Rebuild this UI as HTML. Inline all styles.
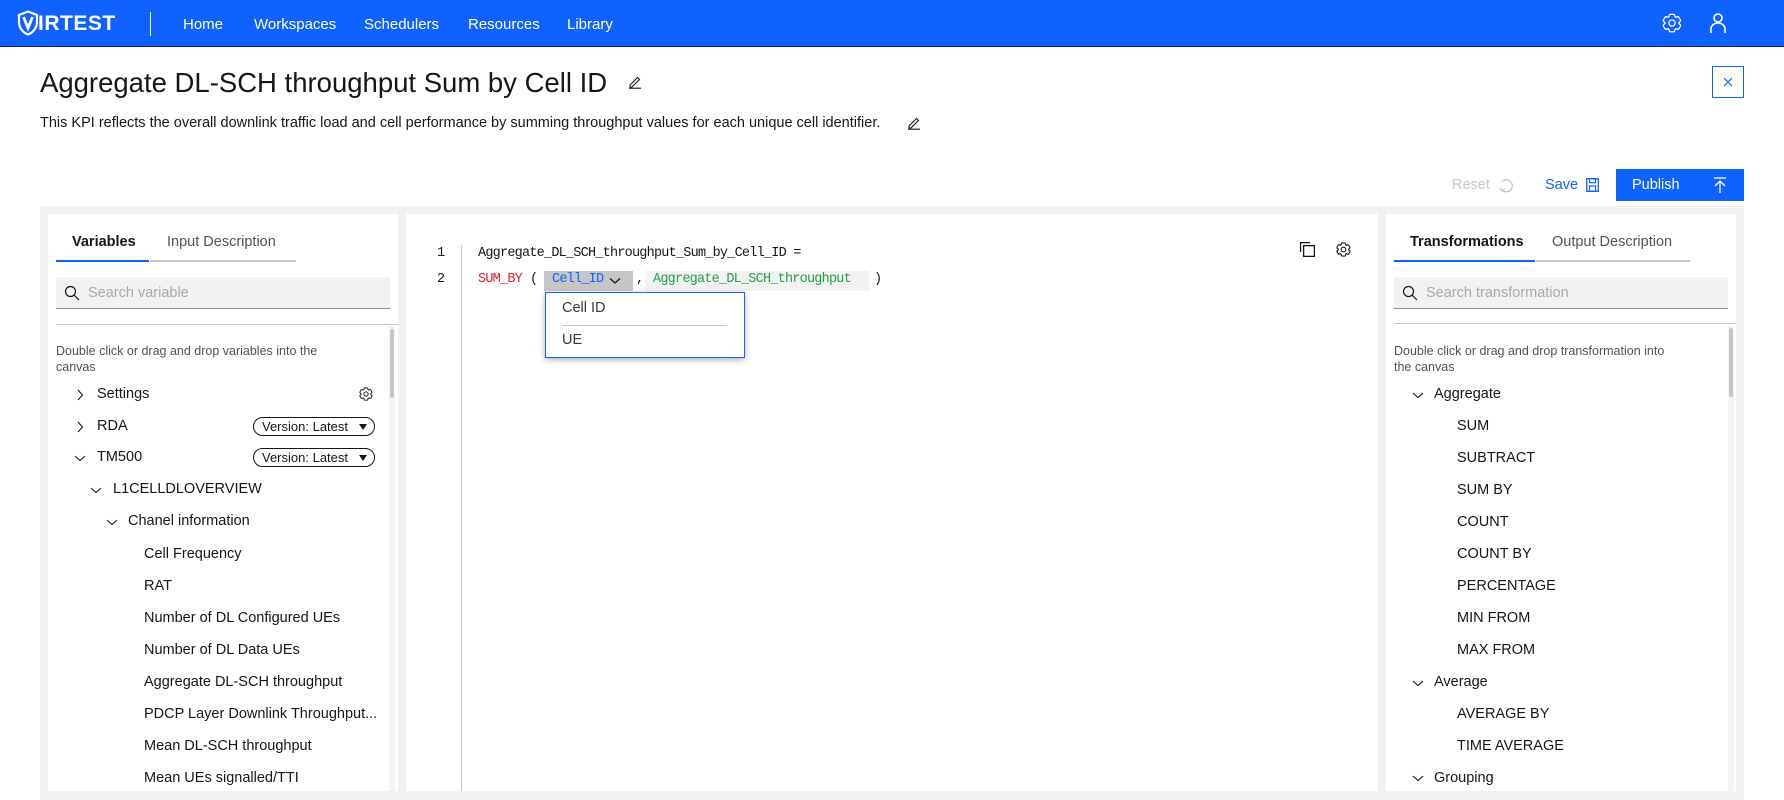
<!DOCTYPE html>
<html><head><meta charset="utf-8">
<style>
*{box-sizing:border-box;margin:0;padding:0}
body{width:1784px;height:800px;overflow:hidden;background:#fff;font-family:"Liberation Sans",sans-serif;color:#161616;position:relative}
.a{position:absolute;white-space:nowrap}
.hdr{position:absolute;left:0;top:0;width:1784px;height:47px;background:#0f62fe;border-bottom:1px solid #262626}
.nav{color:#fff;font-size:15px;top:16px}
.row{font-size:14.5px;color:#161616}
.pill{position:absolute;left:253px;width:122px;height:19px;border:1px solid #161616;border-radius:10px;font-size:13px;padding-left:8px;line-height:17px}
.pill:after{content:"";position:absolute;right:7px;top:6px;border-left:4px solid transparent;border-right:4px solid transparent;border-top:6px solid #161616}
.mono{font-family:"Liberation Mono",monospace;font-size:13.5px;letter-spacing:-0.77px}
.help{font-size:12.5px;color:#525252;line-height:16px}
</style></head><body>
<div class="hdr"></div>
<svg class="a" style="left:17px;top:10px" width="22" height="26" viewBox="0 0 22 26"><path d="M11 1.5 L20 5 V12 C20 18 16 22.5 11 24.5 C6 22.5 2 18 2 12 V5 Z" fill="none" stroke="#fff" stroke-width="2.2"/><path d="M6.5 7 L11 18 L15.5 7" fill="none" stroke="#fff" stroke-width="2.8"/></svg>
<div class="a" style="left:38px;top:12px;color:#fff;font-weight:bold;font-size:21px;letter-spacing:0.5px">IRTEST</div>
<div class="a" style="left:150px;top:12px;width:1px;height:24px;background:#fff"></div>
<div class="a nav" style="left:183px">Home</div>
<div class="a nav" style="left:254px">Workspaces</div>
<div class="a nav" style="left:364px">Schedulers</div>
<div class="a nav" style="left:468px">Resources</div>
<div class="a nav" style="left:567px">Library</div>
<svg class="a" style="left:1662px;top:13px" width="20" height="20" viewBox="0 0 32 32"><path d="M27 16.8v-1.6l2-1.8a2 2 0 0 0 .4-2.5l-2.4-4a2 2 0 0 0-2.4-.9l-2.5.9a11 11 0 0 0-1.4-.8L20.2 3.5A2 2 0 0 0 18.3 2h-4.8a2 2 0 0 0-2 1.6L11 6.1a11 11 0 0 0-1.4.8l-2.5-.9a2 2 0 0 0-2.4.9l-2.4 4a2 2 0 0 0 .4 2.5l2 1.8v1.6l-2 1.8a2 2 0 0 0-.4 2.5l2.4 4a2 2 0 0 0 2.4.9l2.5-.9a11 11 0 0 0 1.4.8l.5 2.6a2 2 0 0 0 2 1.6h4.8a2 2 0 0 0 2-1.6l.5-2.6a11 11 0 0 0 1.4-.8l2.5.9a2 2 0 0 0 2.4-.9l2.4-4a2 2 0 0 0-.4-2.5z" fill="none" stroke="#fff" stroke-width="2"/><circle cx="16" cy="16" r="5" fill="none" stroke="#fff" stroke-width="2"/></svg>
<svg class="a" style="left:1710px;top:13px" width="16" height="21" viewBox="0 0 16 21"><circle cx="8" cy="5" r="4" fill="none" stroke="#fff" stroke-width="1.6"/><path d="M1 20 V16 a7 6 0 0 1 14 0 V20" fill="none" stroke="#fff" stroke-width="1.6"/></svg>

<div class="a" style="left:40px;top:67px;font-size:27.5px;color:#161616">Aggregate DL-SCH throughput Sum by Cell ID</div>
<svg class="a" style="left:628px;top:75px" width="14" height="14" viewBox="0 0 14 14"><path d="M2 10 L9.5 2.5 L11.5 4.5 L4 12 H2 Z M1 13.2 H13" fill="none" stroke="#161616" stroke-width="1.1"/></svg>
<div class="a" style="left:40px;top:115px;font-size:14.5px">This KPI reflects the overall downlink traffic load and cell performance by summing throughput values for each unique cell identifier.</div>
<svg class="a" style="left:907px;top:116px" width="14" height="14" viewBox="0 0 14 14"><path d="M2 10 L9.5 2.5 L11.5 4.5 L4 12 H2 Z M1 13.2 H13" fill="none" stroke="#161616" stroke-width="1.1"/></svg>
<div class="a" style="left:1712px;top:66px;width:32px;height:32px;border:1px solid #0f62fe"></div>
<svg class="a" style="left:1723px;top:77px" width="10" height="10" viewBox="0 0 10 10"><path d="M1 1 L9 9 M9 1 L1 9" stroke="#0f62fe" stroke-width="1.2"/></svg>

<div class="a" style="left:1452px;top:177px;font-size:14.5px;color:#c6c6c6">Reset</div>
<svg class="a" style="left:1498px;top:177px" width="16" height="16" viewBox="0 0 16 16"><path d="M4 13 A6 6 0 1 0 4 4.5" fill="none" stroke="#c6c6c6" stroke-width="1.3"/><path d="M2 11 L4 14 L7 12" fill="none" stroke="#c6c6c6" stroke-width="1.3"/></svg>
<div class="a" style="left:1545px;top:177px;font-size:14.5px;color:#0f62fe">Save</div>
<svg class="a" style="left:1586px;top:178px" width="13" height="14" viewBox="0 0 13 14"><rect x="0.7" y="0.7" width="11.6" height="12.6" fill="none" stroke="#0f62fe" stroke-width="1.3"/><rect x="3.5" y="0.7" width="6" height="4" fill="none" stroke="#0f62fe" stroke-width="1.2"/><rect x="3.5" y="8" width="6" height="5.3" fill="none" stroke="#0f62fe" stroke-width="1.2"/></svg>
<div class="a" style="left:1616px;top:169px;width:128px;height:32px;background:#0f62fe"></div>
<div class="a" style="left:1632px;top:177px;font-size:14.5px;color:#fff">Publish</div>
<svg class="a" style="left:1713px;top:177px" width="14" height="17" viewBox="0 0 14 17"><path d="M1 1 H13 M7 16 V4 M2 9 L7 4 L12 9" fill="none" stroke="#fff" stroke-width="1.3"/></svg>

<div class="a" style="left:40px;top:206px;width:1704px;height:594px;background:#f2f2f2"></div>
<!-- left panel -->
<div class="a" style="left:48px;top:214px;width:350px;height:577px;background:#fff"></div>
<div class="a" style="left:72px;top:234px;font-size:14.5px;font-weight:bold">Variables</div>
<div class="a" style="left:167px;top:234px;font-size:14.5px;color:#525252">Input Description</div>
<div class="a" style="left:56px;top:260px;width:93px;height:2px;background:#0f62fe"></div>
<div class="a" style="left:150px;top:260px;width:146px;height:2px;background:#c6c6c6"></div>
<div class="a" style="left:56px;top:277px;width:334px;height:32px;background:#f2f2f2;border-bottom:1px solid #8d8d8d"></div>
<svg class="a" style="left:64px;top:285px" width="16" height="16" viewBox="0 0 16 16"><circle cx="6.5" cy="6.5" r="5" fill="none" stroke="#161616" stroke-width="1.2"/><path d="M10 10 L15 15" stroke="#161616" stroke-width="1.2"/></svg>
<div class="a" style="left:88px;top:285px;font-size:14.5px;color:#a8a8a8">Search variable</div>
<div class="a" style="left:56px;top:324px;width:342px;height:1px;background:#c6c6c6"></div>
<div class="a" style="left:389px;top:326px;width:6px;height:465px;background:#f4f4f4"></div>
<div class="a" style="left:390px;top:329px;width:4px;height:69px;background:#c6c6c6;border-radius:2px"></div>
<div class="a help" style="left:56px;top:343px">Double click or drag and drop variables into the<br>canvas</div>
<div class="a row" style="left:97px;top:386px">Settings</div>
<div class="a row" style="left:97px;top:418px">RDA</div>
<div class="a row" style="left:97px;top:449px">TM500</div>
<div class="a row" style="left:113px;top:481px">L1CELLDLOVERVIEW</div>
<div class="a row" style="left:128px;top:513px">Chanel information</div>
<div class="a row" style="left:144px;top:546px">Cell Frequency</div>
<div class="a row" style="left:144px;top:578px">RAT</div>
<div class="a row" style="left:144px;top:610px">Number of DL Configured UEs</div>
<div class="a row" style="left:144px;top:642px">Number of DL Data UEs</div>
<div class="a row" style="left:144px;top:674px">Aggregate DL-SCH throughput</div>
<div class="a row" style="left:144px;top:706px">PDCP Layer Downlink Throughput...</div>
<div class="a row" style="left:144px;top:738px">Mean DL-SCH throughput</div>
<div class="a row" style="left:144px;top:770px">Mean UEs signalled/TTI</div>
<svg class="a" style="left:76px;top:389px" width="8" height="12" viewBox="0 0 8 12"><path d="M2 1 L6.5 6 L2 11" fill="none" stroke="#161616" stroke-width="1.1"/></svg>
<svg class="a" style="left:76px;top:421px" width="8" height="12" viewBox="0 0 8 12"><path d="M2 1 L6.5 6 L2 11" fill="none" stroke="#161616" stroke-width="1.1"/></svg>
<svg class="a" style="left:74px;top:454px" width="12" height="8" viewBox="0 0 12 8"><path d="M1 2 L6 6.5 L11 2" fill="none" stroke="#161616" stroke-width="1.1"/></svg>
<svg class="a" style="left:90px;top:486px" width="12" height="8" viewBox="0 0 12 8"><path d="M1 2 L6 6.5 L11 2" fill="none" stroke="#161616" stroke-width="1.1"/></svg>
<svg class="a" style="left:106px;top:518px" width="12" height="8" viewBox="0 0 12 8"><path d="M1 2 L6 6.5 L11 2" fill="none" stroke="#161616" stroke-width="1.1"/></svg>
<svg class="a" style="left:359px;top:387px" width="14" height="14" viewBox="0 0 32 32"><path d="M27 16.8v-1.6l2-1.8a2 2 0 0 0 .4-2.5l-2.4-4a2 2 0 0 0-2.4-.9l-2.5.9a11 11 0 0 0-1.4-.8L20.2 3.5A2 2 0 0 0 18.3 2h-4.8a2 2 0 0 0-2 1.6L11 6.1a11 11 0 0 0-1.4.8l-2.5-.9a2 2 0 0 0-2.4.9l-2.4 4a2 2 0 0 0 .4 2.5l2 1.8v1.6l-2 1.8a2 2 0 0 0-.4 2.5l2.4 4a2 2 0 0 0 2.4.9l2.5-.9a11 11 0 0 0 1.4.8l.5 2.6a2 2 0 0 0 2 1.6h4.8a2 2 0 0 0 2-1.6l.5-2.6a11 11 0 0 0 1.4-.8l2.5.9a2 2 0 0 0 2.4-.9l2.4-4a2 2 0 0 0-.4-2.5z" fill="none" stroke="#161616" stroke-width="2.2"/><circle cx="16" cy="16" r="5" fill="none" stroke="#161616" stroke-width="2.2"/></svg>
<div class="pill" style="top:417px">Version: Latest</div>
<div class="pill" style="top:448px">Version: Latest</div>

<!-- center panel -->
<div class="a" style="left:406px;top:214px;width:972px;height:577px;background:#fff"></div>
<div class="a" style="left:461px;top:245px;width:1px;height:546px;background:#c6c6c6"></div>
<div class="a mono" style="left:437px;top:246px">1</div>
<div class="a mono" style="left:437px;top:272px">2</div>
<div class="a mono" style="left:478px;top:246px">Aggregate_DL_SCH_throughput_Sum_by_Cell_ID =</div>
<div class="a mono" style="left:478px;top:272px;color:#da1e28">SUM_BY</div>
<div class="a mono" style="left:530px;top:272px">(</div>
<div class="a" style="left:544px;top:271px;width:89px;height:20px;background:#c6c6c6"></div>
<div class="a mono" style="left:552px;top:272px;color:#0f62fe">Cell_ID</div>
<svg class="a" style="left:609px;top:277px" width="12" height="8" viewBox="0 0 12 8"><path d="M1 1.5 L6 6 L11 1.5" fill="none" stroke="#161616" stroke-width="1.3"/></svg>
<div class="a mono" style="left:636px;top:272px">,</div>
<div class="a" style="left:645px;top:271px;width:224px;height:20px;background:#f2f2f2"></div>
<div class="a mono" style="left:653px;top:272px;color:#24a148">Aggregate_DL_SCH_throughput</div>
<div class="a mono" style="left:874px;top:272px">)</div>
<div class="a" style="left:545px;top:292px;width:200px;height:66px;background:#fff;border:1px solid #0f62fe;box-shadow:0 2px 6px rgba(0,0,0,.3)"></div>
<div class="a" style="left:562px;top:300px;font-size:14.5px;color:#393939">Cell ID</div>
<div class="a" style="left:562px;top:325px;width:165px;height:1px;background:#c6c6c6"></div>
<div class="a" style="left:562px;top:332px;font-size:14.5px;color:#393939">UE</div>
<svg class="a" style="left:1300px;top:242px" width="15" height="15" viewBox="0 0 15 15"><path d="M0.6 10 V0.6 H10" fill="none" stroke="#161616" stroke-width="1.2"/><rect x="3.6" y="3.6" width="10.8" height="10.8" fill="none" stroke="#161616" stroke-width="1.3"/></svg>
<svg class="a" style="left:1336px;top:242px" width="15" height="15" viewBox="0 0 32 32"><path d="M27 16.8v-1.6l2-1.8a2 2 0 0 0 .4-2.5l-2.4-4a2 2 0 0 0-2.4-.9l-2.5.9a11 11 0 0 0-1.4-.8L20.2 3.5A2 2 0 0 0 18.3 2h-4.8a2 2 0 0 0-2 1.6L11 6.1a11 11 0 0 0-1.4.8l-2.5-.9a2 2 0 0 0-2.4.9l-2.4 4a2 2 0 0 0 .4 2.5l2 1.8v1.6l-2 1.8a2 2 0 0 0-.4 2.5l2.4 4a2 2 0 0 0 2.4.9l2.5-.9a11 11 0 0 0 1.4.8l.5 2.6a2 2 0 0 0 2 1.6h4.8a2 2 0 0 0 2-1.6l.5-2.6a11 11 0 0 0 1.4-.8l2.5.9a2 2 0 0 0 2.4-.9l2.4-4a2 2 0 0 0-.4-2.5z" fill="none" stroke="#161616" stroke-width="2.4"/><circle cx="16" cy="16" r="5" fill="none" stroke="#161616" stroke-width="2.4"/></svg>

<!-- right panel -->
<div class="a" style="left:1386px;top:214px;width:350px;height:577px;background:#fff"></div>
<div class="a" style="left:1410px;top:234px;font-size:14.5px;font-weight:bold">Transformations</div>
<div class="a" style="left:1552px;top:234px;font-size:14.5px;color:#525252">Output Description</div>
<div class="a" style="left:1394px;top:260px;width:141px;height:2px;background:#0f62fe"></div>
<div class="a" style="left:1536px;top:260px;width:154px;height:2px;background:#c6c6c6"></div>
<div class="a" style="left:1394px;top:277px;width:334px;height:32px;background:#f2f2f2;border-bottom:1px solid #8d8d8d"></div>
<svg class="a" style="left:1402px;top:285px" width="16" height="16" viewBox="0 0 16 16"><circle cx="6.5" cy="6.5" r="5" fill="none" stroke="#161616" stroke-width="1.2"/><path d="M10 10 L15 15" stroke="#161616" stroke-width="1.2"/></svg>
<div class="a" style="left:1426px;top:285px;font-size:14.5px;color:#a8a8a8">Search transformation</div>
<div class="a" style="left:1394px;top:323px;width:342px;height:1px;background:#c6c6c6"></div>
<div class="a" style="left:1728px;top:326px;width:6px;height:465px;background:#f4f4f4"></div>
<div class="a" style="left:1729px;top:328px;width:4px;height:69px;background:#c6c6c6;border-radius:2px"></div>
<div class="a help" style="left:1394px;top:343px">Double click or drag and drop transformation into<br>the canvas</div>
<svg class="a" style="left:1412px;top:391px" width="12" height="8" viewBox="0 0 12 8"><path d="M1 2 L6 6.5 L11 2" fill="none" stroke="#161616" stroke-width="1.1"/></svg>
<svg class="a" style="left:1412px;top:679px" width="12" height="8" viewBox="0 0 12 8"><path d="M1 2 L6 6.5 L11 2" fill="none" stroke="#161616" stroke-width="1.1"/></svg>
<svg class="a" style="left:1412px;top:774px" width="12" height="8" viewBox="0 0 12 8"><path d="M1 2 L6 6.5 L11 2" fill="none" stroke="#161616" stroke-width="1.1"/></svg>
<div class="a row" style="left:1434px;top:386px">Aggregate</div>
<div class="a row" style="left:1457px;top:418px">SUM</div>
<div class="a row" style="left:1457px;top:450px">SUBTRACT</div>
<div class="a row" style="left:1457px;top:482px">SUM BY</div>
<div class="a row" style="left:1457px;top:514px">COUNT</div>
<div class="a row" style="left:1457px;top:546px">COUNT BY</div>
<div class="a row" style="left:1457px;top:578px">PERCENTAGE</div>
<div class="a row" style="left:1457px;top:610px">MIN FROM</div>
<div class="a row" style="left:1457px;top:642px">MAX FROM</div>
<div class="a row" style="left:1434px;top:674px">Average</div>
<div class="a row" style="left:1457px;top:706px">AVERAGE BY</div>
<div class="a row" style="left:1457px;top:738px">TIME AVERAGE</div>
<div class="a row" style="left:1434px;top:770px">Grouping</div>
</body></html>
